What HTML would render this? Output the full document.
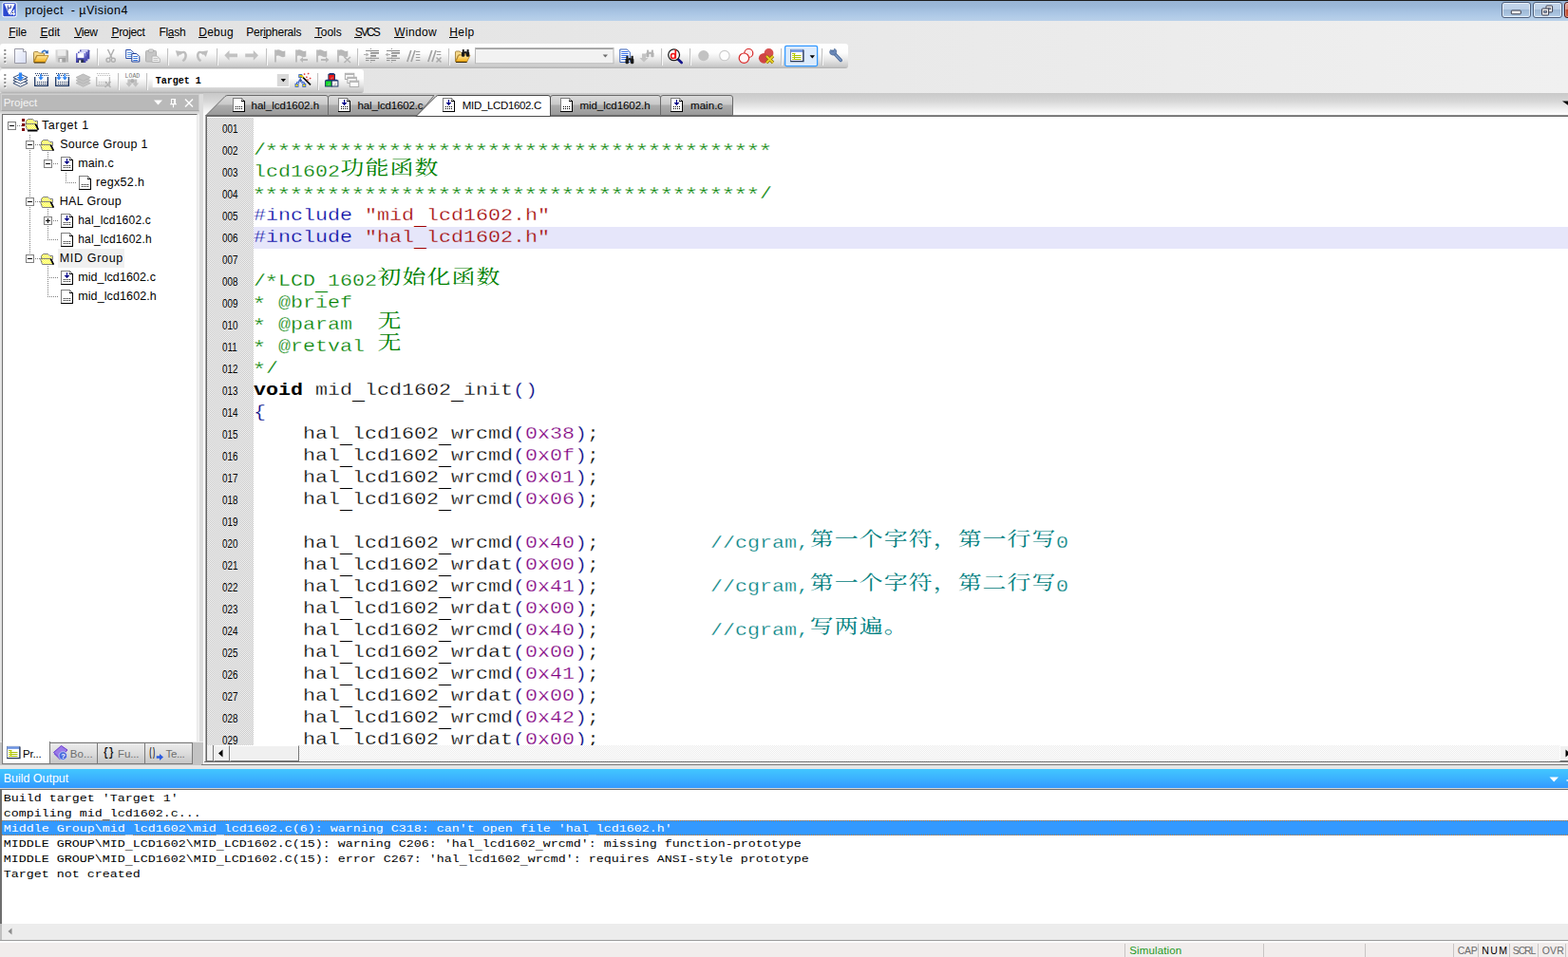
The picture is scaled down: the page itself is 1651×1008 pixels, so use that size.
<!DOCTYPE html>
<html><head><meta charset="utf-8"><title>project - uVision4</title>
<style>

html,body{margin:0;padding:0;}
html{overflow:hidden;width:1651px;height:1008px;}
body{width:1651px;height:1008px;overflow:hidden;position:relative;background:#c0c0c0;font-family:"Liberation Sans",sans-serif;}
#app{position:absolute;left:0;top:0;width:1651px;height:1008px;overflow:hidden;contain:strict;}
.b{position:absolute;box-sizing:border-box;}
.t{position:absolute;white-space:pre;font-family:"Liberation Sans",sans-serif;}
svg{position:absolute;overflow:visible;}
svg text{white-space:pre;}
.cl{position:absolute;white-space:pre;font-family:"Liberation Mono",monospace;font-size:20px;line-height:25.5556px;height:25.5556px;color:#000;transform-origin:0 0;transform:scale(1.08316,0.9);-webkit-text-stroke:0.3px #fff;}
.cl.hl{-webkit-text-stroke-color:#e6e6fa;}
.kw{-webkit-text-stroke:0 transparent;}
.cl i{font-style:normal;display:inline-block;width:24.004px;height:25.5556px;vertical-align:top;position:relative;top:-3.3px;font-family:"Liberation Mono","Noto Serif CJK SC",monospace;font-size:23px;line-height:25.5556px;text-align:center;overflow:visible;-webkit-text-stroke:0 transparent;}
.cl u{text-decoration:none;position:relative;top:4.9px;-webkit-text-stroke:0 transparent;}
.cl b{font-weight:normal;font-size:23.33px;letter-spacing:-2px;line-height:1px;position:relative;top:2.9px;left:-1.6px;}
.bo u{text-decoration:none;position:relative;top:3px;}
.cm{color:#008000}.pp{color:#0000a0}.st{color:#a00000}.nu{color:#800080}.pa{color:#000080}.tc{color:#008080}.kw{font-weight:bold}
.ln{position:absolute;font-size:12.6px;line-height:23px;height:23px;color:#000;transform-origin:0 0;transform:scaleX(0.781);}
.bo{position:absolute;left:3.8px;white-space:pre;font-family:"Liberation Mono",monospace;font-size:13.333px;line-height:18.8235px;height:18.8235px;color:#000;transform-origin:0 0;transform:scaleY(0.85);}

</style></head><body>
<div id="app">
<div class="b " style="left:0px;top:0px;width:1651px;height:22px;background:linear-gradient(#98b4d4 0,#9bb8d8 30%,#a9c5e4 60%,#b9d1ea 100%);"></div>
<div class="b " style="left:0px;top:0px;width:1651px;height:1.2px;background:#1c1c1c;"></div>
<div class="b " style="left:0px;top:22px;width:1651px;height:24px;background:linear-gradient(90deg,#e1e1e1 0,#e8e8e8 50%,#f0f0f0 100%);"></div>
<div class="b " style="left:9.01562px;top:39.3px;width:7.33008px;height:1px;background:#000;"></div>
<div class="b " style="left:42.3156px;top:39.3px;width:8.00391px;height:1px;background:#000;"></div>
<div class="b " style="left:78.1473px;top:39.3px;width:8.00391px;height:1px;background:#000;"></div>
<div class="b " style="left:117.216px;top:39.3px;width:8.00391px;height:1px;background:#000;"></div>
<div class="b " style="left:176.7px;top:39.3px;width:6.67383px;height:1px;background:#000;"></div>
<div class="b " style="left:209.016px;top:39.3px;width:8.66602px;height:1px;background:#000;"></div>
<div class="b " style="left:276.986px;top:39.3px;width:2.66602px;height:1px;background:#000;"></div>
<div class="b " style="left:331.43px;top:39.3px;width:7.33008px;height:1px;background:#000;"></div>
<div class="b " style="left:373.455px;top:39.3px;width:8.00391px;height:1px;background:#000;"></div>
<div class="b " style="left:414.947px;top:39.3px;width:11.3262px;height:1px;background:#000;"></div>
<div class="b " style="left:473.016px;top:39.3px;width:8.66602px;height:1px;background:#000;"></div>
<div class="b " style="left:0px;top:46px;width:1651px;height:52px;background:linear-gradient(90deg,#e1e1e1 0,#e8e8e8 50%,#f0f0f0 100%);"></div>
<div class="b " style="left:0px;top:46px;width:892.7px;height:25.7px;background:linear-gradient(#ffffff 0,#fdfdfd 38%,#e6e6e6 66%,#c8c8c8 93%,#adadad 100%);border-radius:3px;"></div>
<div class="b " style="left:0px;top:72.7px;width:383.3px;height:25.3px;background:linear-gradient(#ffffff 0,#fdfdfd 38%,#e6e6e6 66%,#c8c8c8 93%,#adadad 100%);border-radius:3px;"></div>
<div class="b " style="left:0px;top:98px;width:1651px;height:712px;background:#c3c3c3;"></div>
<div class="b " style="left:1px;top:99px;width:209px;height:17.5px;background:#b9b9b9;border:1px solid #cfcfcf;border-bottom-color:#a8a8a8;"></div>
<svg style="left:162px;top:104px" width="42" height="10" viewBox="0 0 42 10"><path d="M0 1.5h9l-4.5 5z" fill="#fff"/><path d="M18.5 0.5h4v5h-4zM17 5.7h7M20.5 5.7v3.5M21.5 0.5v5" stroke="#fff" stroke-width="1.1" fill="none"/><path d="M33 0.5l8 8M41 0.5l-8 8" stroke="#fff" stroke-width="1.5" fill="none"/></svg>
<div class="b " style="left:207px;top:120px;width:3px;height:662px;background:linear-gradient(90deg,#ffffff 0,#ffffff 33%,#f0f0f0 34%);"></div>
<div class="b " style="left:210px;top:99px;width:4px;height:706px;background:#dcdcdc;"></div>
<div class="b " style="left:214px;top:99px;width:2px;height:706px;background:#fff;"></div>
<div class="b " style="left:0px;top:116.5px;width:210px;height:4.5px;background:linear-gradient(#cacaca,#ececec);"></div>
<div class="b " style="left:0px;top:120px;width:2px;height:662px;background:#e4e4e4;"></div>
<div class="b " style="left:1.5px;top:120px;width:206px;height:661.5px;background:#fff;border:1.5px solid #6e6e6e;border-right-color:#e8e8e8;border-bottom-color:#e8e8e8;"></div>
<div class="b " style="left:0px;top:781px;width:214px;height:1px;background:#ececec;"></div>
<div class="b " style="left:61px;top:262px;width:70px;height:19.7px;background:#f0f0f0;"></div>
<svg style="left:0;top:0" width="214" height="330" viewBox="0 0 214 330"><defs><pattern id="ck" width="2" height="2" patternUnits="userSpaceOnUse"><rect width="2" height="2" fill="#fff"/><rect width="1" height="1" fill="#ffff00"/><rect x="1" y="1" width="1" height="1" fill="#ffff00"/></pattern></defs><path d="M31.5 142 V272" stroke="#808080" stroke-width="1" stroke-dasharray="1 1" fill="none" shape-rendering="crispEdges"/><path d="M18 132.5 H23" stroke="#808080" stroke-width="1" stroke-dasharray="1 1" fill="none" shape-rendering="crispEdges"/><path d="M37 152.5 H42" stroke="#808080" stroke-width="1" stroke-dasharray="1 1" fill="none" shape-rendering="crispEdges"/><path d="M37 212.5 H42" stroke="#808080" stroke-width="1" stroke-dasharray="1 1" fill="none" shape-rendering="crispEdges"/><path d="M37 272.5 H42" stroke="#808080" stroke-width="1" stroke-dasharray="1 1" fill="none" shape-rendering="crispEdges"/><path d="M50.5 160 V168" stroke="#808080" stroke-width="1" stroke-dasharray="1 1" fill="none" shape-rendering="crispEdges"/><path d="M56 172.5 H62" stroke="#808080" stroke-width="1" stroke-dasharray="1 1" fill="none" shape-rendering="crispEdges"/><path d="M69.5 182 V192" stroke="#808080" stroke-width="1" stroke-dasharray="1 1" fill="none" shape-rendering="crispEdges"/><path d="M69 192.5 H81" stroke="#808080" stroke-width="1" stroke-dasharray="1 1" fill="none" shape-rendering="crispEdges"/><path d="M50.5 220 V252" stroke="#808080" stroke-width="1" stroke-dasharray="1 1" fill="none" shape-rendering="crispEdges"/><path d="M50 252.5 H62" stroke="#808080" stroke-width="1" stroke-dasharray="1 1" fill="none" shape-rendering="crispEdges"/><path d="M56 232.5 H62" stroke="#808080" stroke-width="1" stroke-dasharray="1 1" fill="none" shape-rendering="crispEdges"/><path d="M50.5 280 V312" stroke="#808080" stroke-width="1" stroke-dasharray="1 1" fill="none" shape-rendering="crispEdges"/><path d="M50 312.5 H62" stroke="#808080" stroke-width="1" stroke-dasharray="1 1" fill="none" shape-rendering="crispEdges"/><path d="M52 292.5 H62" stroke="#808080" stroke-width="1" stroke-dasharray="1 1" fill="none" shape-rendering="crispEdges"/><g shape-rendering="crispEdges"><rect x="8.5" y="128.5" width="8" height="8" fill="#fff" stroke="#808080" stroke-width="1"/><rect x="10" y="132" width="5" height="1" fill="#000"/></g><g shape-rendering="crispEdges"><rect x="23" y="125" width="3" height="3" fill="#800000"/><rect x="23" y="130" width="3" height="3" fill="#800000"/><rect x="23" y="135" width="3" height="3" fill="#800000"/></g><g transform="translate(26,125)"><path d="M3 12.5 H12.5 V2.5" fill="none" stroke="#000" stroke-width="2"/><path d="M1.5 6 V2.5 L3.5 0.5 H8.5 L10.5 2.5 H13.5 V6.5 H1.5Z" fill="url(#ck)" stroke="#808080" stroke-width="1"/><path d="M0.5 5.5 H11.5 L14.3 11.5 H2.5 Z" fill="url(#ck)" stroke="#808080" stroke-width="1"/><path d="M11.3 5.6 L14.4 11.6" fill="none" stroke="#000" stroke-width="1.7"/></g><g shape-rendering="crispEdges"><rect x="27.5" y="148.5" width="8" height="8" fill="#fff" stroke="#808080" stroke-width="1"/><rect x="29" y="152" width="5" height="1" fill="#000"/></g><g transform="translate(42,147)"><path d="M1.5 6 V2.5 L3.5 0.5 H8.5 L10.5 2.5 H13.5 V6.5 H1.5Z" fill="url(#ck)" stroke="#808080" stroke-width="1"/><path d="M0.5 5.5 H11.5 L14.3 11.5 H2.5 Z" fill="url(#ck)" stroke="#808080" stroke-width="1"/><path d="M11.3 5.6 L14.4 11.6" fill="none" stroke="#000" stroke-width="1.7"/></g><g shape-rendering="crispEdges"><rect x="46.5" y="168.5" width="8" height="8" fill="#fff" stroke="#808080" stroke-width="1"/><rect x="48" y="172" width="5" height="1" fill="#000"/></g><g transform="translate(64,165)" shape-rendering="crispEdges"><path d="M0 0 H9.5 L13 3.5 V15 H0 Z" fill="#fff"/><rect x="0" y="0" width="1" height="15" fill="#808080"/><rect x="0" y="0" width="10" height="1" fill="#808080"/><rect x="12" y="3" width="1" height="12" fill="#000"/><rect x="0" y="14" width="13" height="1" fill="#000"/><rect x="9" y="3" width="4" height="1" fill="#000"/><rect x="9" y="1" width="1" height="2" fill="#909090"/><rect x="10" y="1" width="1" height="1" fill="#606060"/><rect x="11" y="2" width="1" height="1" fill="#606060"/><rect x="6" y="2" width="1" height="3" fill="#00008b"/><rect x="4" y="5" width="5" height="1" fill="#00008b"/><rect x="5" y="6" width="3" height="1" fill="#00008b"/><rect x="6" y="7" width="1" height="1" fill="#00008b"/><rect x="3" y="9" width="1" height="1" fill="#000"/><rect x="5" y="9" width="1" height="1" fill="#000"/><rect x="7" y="9" width="1" height="1" fill="#000"/><rect x="9" y="9" width="1" height="1" fill="#000"/><rect x="3" y="11" width="1" height="1" fill="#000"/><rect x="5" y="11" width="1" height="1" fill="#000"/><rect x="7" y="11" width="1" height="1" fill="#000"/><rect x="9" y="11" width="1" height="1" fill="#000"/></g><g transform="translate(83,185)" shape-rendering="crispEdges"><path d="M0 0 H9.5 L13 3.5 V15 H0 Z" fill="#fff"/><rect x="0" y="0" width="1" height="15" fill="#808080"/><rect x="0" y="0" width="10" height="1" fill="#808080"/><rect x="12" y="3" width="1" height="12" fill="#000"/><rect x="0" y="14" width="13" height="1" fill="#000"/><rect x="9" y="3" width="4" height="1" fill="#000"/><rect x="9" y="1" width="1" height="2" fill="#909090"/><rect x="10" y="1" width="1" height="1" fill="#606060"/><rect x="11" y="2" width="1" height="1" fill="#606060"/><rect x="3" y="9" width="1" height="1" fill="#000"/><rect x="5" y="9" width="1" height="1" fill="#000"/><rect x="7" y="9" width="1" height="1" fill="#000"/><rect x="9" y="9" width="1" height="1" fill="#000"/><rect x="3" y="11" width="1" height="1" fill="#000"/><rect x="5" y="11" width="1" height="1" fill="#000"/><rect x="7" y="11" width="1" height="1" fill="#000"/><rect x="9" y="11" width="1" height="1" fill="#000"/></g><g shape-rendering="crispEdges"><rect x="27.5" y="208.5" width="8" height="8" fill="#fff" stroke="#808080" stroke-width="1"/><rect x="29" y="212" width="5" height="1" fill="#000"/></g><g transform="translate(42,207)"><path d="M1.5 6 V2.5 L3.5 0.5 H8.5 L10.5 2.5 H13.5 V6.5 H1.5Z" fill="url(#ck)" stroke="#808080" stroke-width="1"/><path d="M0.5 5.5 H11.5 L14.3 11.5 H2.5 Z" fill="url(#ck)" stroke="#808080" stroke-width="1"/><path d="M11.3 5.6 L14.4 11.6" fill="none" stroke="#000" stroke-width="1.7"/></g><g shape-rendering="crispEdges"><rect x="46.5" y="228.5" width="8" height="8" fill="#fff" stroke="#808080" stroke-width="1"/><rect x="48" y="232" width="5" height="1" fill="#000"/><rect x="50" y="230" width="1" height="5" fill="#000"/></g><g transform="translate(64,225)" shape-rendering="crispEdges"><path d="M0 0 H9.5 L13 3.5 V15 H0 Z" fill="#fff"/><rect x="0" y="0" width="1" height="15" fill="#808080"/><rect x="0" y="0" width="10" height="1" fill="#808080"/><rect x="12" y="3" width="1" height="12" fill="#000"/><rect x="0" y="14" width="13" height="1" fill="#000"/><rect x="9" y="3" width="4" height="1" fill="#000"/><rect x="9" y="1" width="1" height="2" fill="#909090"/><rect x="10" y="1" width="1" height="1" fill="#606060"/><rect x="11" y="2" width="1" height="1" fill="#606060"/><rect x="6" y="2" width="1" height="3" fill="#00008b"/><rect x="4" y="5" width="5" height="1" fill="#00008b"/><rect x="5" y="6" width="3" height="1" fill="#00008b"/><rect x="6" y="7" width="1" height="1" fill="#00008b"/><rect x="3" y="9" width="1" height="1" fill="#000"/><rect x="5" y="9" width="1" height="1" fill="#000"/><rect x="7" y="9" width="1" height="1" fill="#000"/><rect x="9" y="9" width="1" height="1" fill="#000"/><rect x="3" y="11" width="1" height="1" fill="#000"/><rect x="5" y="11" width="1" height="1" fill="#000"/><rect x="7" y="11" width="1" height="1" fill="#000"/><rect x="9" y="11" width="1" height="1" fill="#000"/></g><g transform="translate(64,245)" shape-rendering="crispEdges"><path d="M0 0 H9.5 L13 3.5 V15 H0 Z" fill="#fff"/><rect x="0" y="0" width="1" height="15" fill="#808080"/><rect x="0" y="0" width="10" height="1" fill="#808080"/><rect x="12" y="3" width="1" height="12" fill="#000"/><rect x="0" y="14" width="13" height="1" fill="#000"/><rect x="9" y="3" width="4" height="1" fill="#000"/><rect x="9" y="1" width="1" height="2" fill="#909090"/><rect x="10" y="1" width="1" height="1" fill="#606060"/><rect x="11" y="2" width="1" height="1" fill="#606060"/><rect x="3" y="9" width="1" height="1" fill="#000"/><rect x="5" y="9" width="1" height="1" fill="#000"/><rect x="7" y="9" width="1" height="1" fill="#000"/><rect x="9" y="9" width="1" height="1" fill="#000"/><rect x="3" y="11" width="1" height="1" fill="#000"/><rect x="5" y="11" width="1" height="1" fill="#000"/><rect x="7" y="11" width="1" height="1" fill="#000"/><rect x="9" y="11" width="1" height="1" fill="#000"/></g><g shape-rendering="crispEdges"><rect x="27.5" y="268.5" width="8" height="8" fill="#fff" stroke="#808080" stroke-width="1"/><rect x="29" y="272" width="5" height="1" fill="#000"/></g><g transform="translate(42,267)"><path d="M1.5 6 V2.5 L3.5 0.5 H8.5 L10.5 2.5 H13.5 V6.5 H1.5Z" fill="url(#ck)" stroke="#808080" stroke-width="1"/><path d="M0.5 5.5 H11.5 L14.3 11.5 H2.5 Z" fill="url(#ck)" stroke="#808080" stroke-width="1"/><path d="M11.3 5.6 L14.4 11.6" fill="none" stroke="#000" stroke-width="1.7"/></g><g transform="translate(64,285)" shape-rendering="crispEdges"><path d="M0 0 H9.5 L13 3.5 V15 H0 Z" fill="#fff"/><rect x="0" y="0" width="1" height="15" fill="#808080"/><rect x="0" y="0" width="10" height="1" fill="#808080"/><rect x="12" y="3" width="1" height="12" fill="#000"/><rect x="0" y="14" width="13" height="1" fill="#000"/><rect x="9" y="3" width="4" height="1" fill="#000"/><rect x="9" y="1" width="1" height="2" fill="#909090"/><rect x="10" y="1" width="1" height="1" fill="#606060"/><rect x="11" y="2" width="1" height="1" fill="#606060"/><rect x="6" y="2" width="1" height="3" fill="#00008b"/><rect x="4" y="5" width="5" height="1" fill="#00008b"/><rect x="5" y="6" width="3" height="1" fill="#00008b"/><rect x="6" y="7" width="1" height="1" fill="#00008b"/><rect x="3" y="9" width="1" height="1" fill="#000"/><rect x="5" y="9" width="1" height="1" fill="#000"/><rect x="7" y="9" width="1" height="1" fill="#000"/><rect x="9" y="9" width="1" height="1" fill="#000"/><rect x="3" y="11" width="1" height="1" fill="#000"/><rect x="5" y="11" width="1" height="1" fill="#000"/><rect x="7" y="11" width="1" height="1" fill="#000"/><rect x="9" y="11" width="1" height="1" fill="#000"/></g><g transform="translate(64,305)" shape-rendering="crispEdges"><path d="M0 0 H9.5 L13 3.5 V15 H0 Z" fill="#fff"/><rect x="0" y="0" width="1" height="15" fill="#808080"/><rect x="0" y="0" width="10" height="1" fill="#808080"/><rect x="12" y="3" width="1" height="12" fill="#000"/><rect x="0" y="14" width="13" height="1" fill="#000"/><rect x="9" y="3" width="4" height="1" fill="#000"/><rect x="9" y="1" width="1" height="2" fill="#909090"/><rect x="10" y="1" width="1" height="1" fill="#606060"/><rect x="11" y="2" width="1" height="1" fill="#606060"/><rect x="3" y="9" width="1" height="1" fill="#000"/><rect x="5" y="9" width="1" height="1" fill="#000"/><rect x="7" y="9" width="1" height="1" fill="#000"/><rect x="9" y="9" width="1" height="1" fill="#000"/><rect x="3" y="11" width="1" height="1" fill="#000"/><rect x="5" y="11" width="1" height="1" fill="#000"/><rect x="7" y="11" width="1" height="1" fill="#000"/><rect x="9" y="11" width="1" height="1" fill="#000"/></g></svg>
<div class="b " style="left:0px;top:782px;width:214px;height:28px;background:#c3c3c3;"></div>
<div class="b " style="left:2px;top:781px;width:51px;height:23.5px;background:#fff;border:1px solid #7a7a7a;border-top:none;"></div>
<div class="b " style="left:52px;top:782px;width:51px;height:22.5px;background:linear-gradient(#ececec,#dcdcdc 50%,#c6c6c6);border:1px solid #7a7a7a;"></div>
<div class="b " style="left:102px;top:782px;width:51px;height:22.5px;background:linear-gradient(#ececec,#dcdcdc 50%,#c6c6c6);border:1px solid #7a7a7a;"></div>
<div class="b " style="left:152px;top:782px;width:51px;height:22.5px;background:linear-gradient(#ececec,#dcdcdc 50%,#c6c6c6);border:1px solid #7a7a7a;"></div>
<div class="b " style="left:214px;top:98px;width:1437.5px;height:24px;background:linear-gradient(#c9c9c9 0,#d6d6d6 35%,#f2f2f2 75%,#ffffff 100%);"></div>
<div class="b " style="left:216px;top:121px;width:1435px;height:682px;background:#fff;border-left:1px solid #a6a6a6;border-top:1px solid #8a8a8a;"></div>
<div class="b " style="left:217px;top:122px;width:1434px;height:681px;border-left:1px solid #686868;border-top:1px solid #6a6a6a;border-bottom:1px solid #707070;background:#fff;"></div>
<svg style="left:0;top:0" width="1651" height="125" viewBox="0 0 1651 125"><defs><linearGradient id="tg" x1="0" y1="0" x2="0" y2="1"><stop offset="0" stop-color="#dcdcdc"/><stop offset="0.45" stop-color="#c9c9c9"/><stop offset="0.5" stop-color="#acacac"/><stop offset="1" stop-color="#999999"/></linearGradient></defs><path d="M217 121.5 L237 101.5 Q238 100.5 240 100.5 H343 Q345.5 100.5 345.5 103 V121.5 Z" fill="url(#tg)" stroke="#6a6a6a" stroke-width="1"/><path d="M345.5 121.5 V103 Q345.5 100.5 348 100.5 H457 L440 121.5 Z" fill="url(#tg)" stroke="#6a6a6a" stroke-width="1"/><path d="M579.5 121.5 V103 Q579.5 100.5 582 100.5 H693 Q695.5 100.5 695.5 103 V121.5 Z" fill="url(#tg)" stroke="#6a6a6a" stroke-width="1"/><path d="M695.5 121.5 V103 Q695.5 100.5 698 100.5 H769 Q771.5 100.5 771.5 103 V121.5 Z" fill="url(#tg)" stroke="#6a6a6a" stroke-width="1"/><path d="M438 122.5 L459 101.5 Q460 100.5 462 100.5 H577 Q579.5 100.5 579.5 103 V122.5 Z" fill="#fff" stroke="#4a4a4a" stroke-width="1"/><g transform="translate(245,103)" shape-rendering="crispEdges"><path d="M0 0 H9.5 L13 3.5 V15 H0 Z" fill="#fff"/><rect x="0" y="0" width="1" height="15" fill="#808080"/><rect x="0" y="0" width="10" height="1" fill="#808080"/><rect x="12" y="3" width="1" height="12" fill="#000"/><rect x="0" y="14" width="13" height="1" fill="#000"/><rect x="9" y="3" width="4" height="1" fill="#000"/><rect x="9" y="1" width="1" height="2" fill="#909090"/><rect x="10" y="1" width="1" height="1" fill="#606060"/><rect x="11" y="2" width="1" height="1" fill="#606060"/><rect x="3" y="9" width="1" height="1" fill="#000"/><rect x="5" y="9" width="1" height="1" fill="#000"/><rect x="7" y="9" width="1" height="1" fill="#000"/><rect x="9" y="9" width="1" height="1" fill="#000"/><rect x="3" y="11" width="1" height="1" fill="#000"/><rect x="5" y="11" width="1" height="1" fill="#000"/><rect x="7" y="11" width="1" height="1" fill="#000"/><rect x="9" y="11" width="1" height="1" fill="#000"/></g><g transform="translate(356,103)" shape-rendering="crispEdges"><path d="M0 0 H9.5 L13 3.5 V15 H0 Z" fill="#fff"/><rect x="0" y="0" width="1" height="15" fill="#808080"/><rect x="0" y="0" width="10" height="1" fill="#808080"/><rect x="12" y="3" width="1" height="12" fill="#000"/><rect x="0" y="14" width="13" height="1" fill="#000"/><rect x="9" y="3" width="4" height="1" fill="#000"/><rect x="9" y="1" width="1" height="2" fill="#909090"/><rect x="10" y="1" width="1" height="1" fill="#606060"/><rect x="11" y="2" width="1" height="1" fill="#606060"/><rect x="6" y="2" width="1" height="3" fill="#00008b"/><rect x="4" y="5" width="5" height="1" fill="#00008b"/><rect x="5" y="6" width="3" height="1" fill="#00008b"/><rect x="6" y="7" width="1" height="1" fill="#00008b"/><rect x="3" y="9" width="1" height="1" fill="#000"/><rect x="5" y="9" width="1" height="1" fill="#000"/><rect x="7" y="9" width="1" height="1" fill="#000"/><rect x="9" y="9" width="1" height="1" fill="#000"/><rect x="3" y="11" width="1" height="1" fill="#000"/><rect x="5" y="11" width="1" height="1" fill="#000"/><rect x="7" y="11" width="1" height="1" fill="#000"/><rect x="9" y="11" width="1" height="1" fill="#000"/></g><g transform="translate(466,103)" shape-rendering="crispEdges"><path d="M0 0 H9.5 L13 3.5 V15 H0 Z" fill="#fff"/><rect x="0" y="0" width="1" height="15" fill="#808080"/><rect x="0" y="0" width="10" height="1" fill="#808080"/><rect x="12" y="3" width="1" height="12" fill="#000"/><rect x="0" y="14" width="13" height="1" fill="#000"/><rect x="9" y="3" width="4" height="1" fill="#000"/><rect x="9" y="1" width="1" height="2" fill="#909090"/><rect x="10" y="1" width="1" height="1" fill="#606060"/><rect x="11" y="2" width="1" height="1" fill="#606060"/><rect x="6" y="2" width="1" height="3" fill="#00008b"/><rect x="4" y="5" width="5" height="1" fill="#00008b"/><rect x="5" y="6" width="3" height="1" fill="#00008b"/><rect x="6" y="7" width="1" height="1" fill="#00008b"/><rect x="3" y="9" width="1" height="1" fill="#000"/><rect x="5" y="9" width="1" height="1" fill="#000"/><rect x="7" y="9" width="1" height="1" fill="#000"/><rect x="9" y="9" width="1" height="1" fill="#000"/><rect x="3" y="11" width="1" height="1" fill="#000"/><rect x="5" y="11" width="1" height="1" fill="#000"/><rect x="7" y="11" width="1" height="1" fill="#000"/><rect x="9" y="11" width="1" height="1" fill="#000"/></g><g transform="translate(590,103)" shape-rendering="crispEdges"><path d="M0 0 H9.5 L13 3.5 V15 H0 Z" fill="#fff"/><rect x="0" y="0" width="1" height="15" fill="#808080"/><rect x="0" y="0" width="10" height="1" fill="#808080"/><rect x="12" y="3" width="1" height="12" fill="#000"/><rect x="0" y="14" width="13" height="1" fill="#000"/><rect x="9" y="3" width="4" height="1" fill="#000"/><rect x="9" y="1" width="1" height="2" fill="#909090"/><rect x="10" y="1" width="1" height="1" fill="#606060"/><rect x="11" y="2" width="1" height="1" fill="#606060"/><rect x="3" y="9" width="1" height="1" fill="#000"/><rect x="5" y="9" width="1" height="1" fill="#000"/><rect x="7" y="9" width="1" height="1" fill="#000"/><rect x="9" y="9" width="1" height="1" fill="#000"/><rect x="3" y="11" width="1" height="1" fill="#000"/><rect x="5" y="11" width="1" height="1" fill="#000"/><rect x="7" y="11" width="1" height="1" fill="#000"/><rect x="9" y="11" width="1" height="1" fill="#000"/></g><g transform="translate(706,103)" shape-rendering="crispEdges"><path d="M0 0 H9.5 L13 3.5 V15 H0 Z" fill="#fff"/><rect x="0" y="0" width="1" height="15" fill="#808080"/><rect x="0" y="0" width="10" height="1" fill="#808080"/><rect x="12" y="3" width="1" height="12" fill="#000"/><rect x="0" y="14" width="13" height="1" fill="#000"/><rect x="9" y="3" width="4" height="1" fill="#000"/><rect x="9" y="1" width="1" height="2" fill="#909090"/><rect x="10" y="1" width="1" height="1" fill="#606060"/><rect x="11" y="2" width="1" height="1" fill="#606060"/><rect x="6" y="2" width="1" height="3" fill="#00008b"/><rect x="4" y="5" width="5" height="1" fill="#00008b"/><rect x="5" y="6" width="3" height="1" fill="#00008b"/><rect x="6" y="7" width="1" height="1" fill="#00008b"/><rect x="3" y="9" width="1" height="1" fill="#000"/><rect x="5" y="9" width="1" height="1" fill="#000"/><rect x="7" y="9" width="1" height="1" fill="#000"/><rect x="9" y="9" width="1" height="1" fill="#000"/><rect x="3" y="11" width="1" height="1" fill="#000"/><rect x="5" y="11" width="1" height="1" fill="#000"/><rect x="7" y="11" width="1" height="1" fill="#000"/><rect x="9" y="11" width="1" height="1" fill="#000"/></g><path d="M1645 106.5 h7 v5 z" fill="#000"/></svg>
<div class="b " style="left:218px;top:124px;width:48.5px;height:661px;background:#dedede;background-image:linear-gradient(45deg,#c8c8c8 25%,transparent 25%,transparent 75%,#c8c8c8 75%),linear-gradient(45deg,#c8c8c8 25%,transparent 25%,transparent 75%,#c8c8c8 75%);background-size:2px 2px;background-position:0 0,1px 1px;background-color:#f4f4f4;"></div>
<div class="b " style="left:266.5px;top:239px;width:1385px;height:23px;background:#e6e6fa;"></div>
<div class="b" style="left:216px;top:124px;width:1435px;height:661px;overflow:hidden;">
<div class="ln" style="left:17.6px;top:1px">001</div>
<div class="ln" style="left:17.6px;top:24px">002</div>
<div class="cl" style="left:50.5px;top:23px"><span class="cm">/<b>*****************************************</b></span></div>
<div class="ln" style="left:17.6px;top:47px">003</div>
<div class="cl" style="left:50.5px;top:46px"><span class="cm">lcd1602<i>功</i><i>能</i><i>函</i><i>数</i></span></div>
<div class="ln" style="left:17.6px;top:70px">004</div>
<div class="cl" style="left:50.5px;top:69px"><span class="cm"><b>*****************************************</b>/</span></div>
<div class="ln" style="left:17.6px;top:93px">005</div>
<div class="cl" style="left:50.5px;top:92px"><span class="pp">#include </span><span class="st">&quot;mid<u>_</u>lcd1602.h&quot;</span></div>
<div class="ln" style="left:17.6px;top:116px">006</div>
<div class="cl hl" style="left:50.5px;top:115px"><span class="pp">#include </span><span class="st">&quot;hal<u>_</u>lcd1602.h&quot;</span></div>
<div class="ln" style="left:17.6px;top:139px">007</div>
<div class="ln" style="left:17.6px;top:162px">008</div>
<div class="cl" style="left:50.5px;top:161px"><span class="cm">/<b>*</b>LCD<u>_</u>1602<i>初</i><i>始</i><i>化</i><i>函</i><i>数</i></span></div>
<div class="ln" style="left:17.6px;top:185px">009</div>
<div class="cl" style="left:50.5px;top:184px"><span class="cm"><b>*</b> @brief</span></div>
<div class="ln" style="left:17.6px;top:208px">010</div>
<div class="cl" style="left:50.5px;top:207px"><span class="cm"><b>*</b> @param  <i>无</i></span></div>
<div class="ln" style="left:17.6px;top:231px">011</div>
<div class="cl" style="left:50.5px;top:230px"><span class="cm"><b>*</b> @retval <i>无</i></span></div>
<div class="ln" style="left:17.6px;top:254px">012</div>
<div class="cl" style="left:50.5px;top:253px"><span class="cm"><b>*</b>/</span></div>
<div class="ln" style="left:17.6px;top:277px">013</div>
<div class="cl" style="left:50.5px;top:276px"><span class="kw">void</span> mid<u>_</u>lcd1602<u>_</u>init<span class="pa">()</span></div>
<div class="ln" style="left:17.6px;top:300px">014</div>
<div class="cl" style="left:50.5px;top:299px"><span class="pa">{</span></div>
<div class="ln" style="left:17.6px;top:323px">015</div>
<div class="cl" style="left:50.5px;top:322px">    hal<u>_</u>lcd1602<u>_</u>wrcmd<span class="pa">(</span><span class="nu">0x38</span><span class="pa">)</span>;</div>
<div class="ln" style="left:17.6px;top:346px">016</div>
<div class="cl" style="left:50.5px;top:345px">    hal<u>_</u>lcd1602<u>_</u>wrcmd<span class="pa">(</span><span class="nu">0x0f</span><span class="pa">)</span>;</div>
<div class="ln" style="left:17.6px;top:369px">017</div>
<div class="cl" style="left:50.5px;top:368px">    hal<u>_</u>lcd1602<u>_</u>wrcmd<span class="pa">(</span><span class="nu">0x01</span><span class="pa">)</span>;</div>
<div class="ln" style="left:17.6px;top:392px">018</div>
<div class="cl" style="left:50.5px;top:391px">    hal<u>_</u>lcd1602<u>_</u>wrcmd<span class="pa">(</span><span class="nu">0x06</span><span class="pa">)</span>;</div>
<div class="ln" style="left:17.6px;top:415px">019</div>
<div class="ln" style="left:17.6px;top:438px">020</div>
<div class="cl" style="left:50.5px;top:437px">    hal<u>_</u>lcd1602<u>_</u>wrcmd<span class="pa">(</span><span class="nu">0x40</span><span class="pa">)</span>;<span class="tc">         //cgram,<i>第</i><i>一</i><i>个</i><i>字</i><i>符</i><i>，</i><i>第</i><i>一</i><i>行</i><i>写</i>0</span></div>
<div class="ln" style="left:17.6px;top:461px">021</div>
<div class="cl" style="left:50.5px;top:460px">    hal<u>_</u>lcd1602<u>_</u>wrdat<span class="pa">(</span><span class="nu">0x00</span><span class="pa">)</span>;</div>
<div class="ln" style="left:17.6px;top:484px">022</div>
<div class="cl" style="left:50.5px;top:483px">    hal<u>_</u>lcd1602<u>_</u>wrcmd<span class="pa">(</span><span class="nu">0x41</span><span class="pa">)</span>;<span class="tc">         //cgram,<i>第</i><i>一</i><i>个</i><i>字</i><i>符</i><i>，</i><i>第</i><i>二</i><i>行</i><i>写</i>0</span></div>
<div class="ln" style="left:17.6px;top:507px">023</div>
<div class="cl" style="left:50.5px;top:506px">    hal<u>_</u>lcd1602<u>_</u>wrdat<span class="pa">(</span><span class="nu">0x00</span><span class="pa">)</span>;</div>
<div class="ln" style="left:17.6px;top:530px">024</div>
<div class="cl" style="left:50.5px;top:529px">    hal<u>_</u>lcd1602<u>_</u>wrcmd<span class="pa">(</span><span class="nu">0x40</span><span class="pa">)</span>;<span class="tc">         //cgram,<i>写</i><i>两</i><i>遍</i><i>。</i></span></div>
<div class="ln" style="left:17.6px;top:553px">025</div>
<div class="cl" style="left:50.5px;top:552px">    hal<u>_</u>lcd1602<u>_</u>wrdat<span class="pa">(</span><span class="nu">0x00</span><span class="pa">)</span>;</div>
<div class="ln" style="left:17.6px;top:576px">026</div>
<div class="cl" style="left:50.5px;top:575px">    hal<u>_</u>lcd1602<u>_</u>wrcmd<span class="pa">(</span><span class="nu">0x41</span><span class="pa">)</span>;</div>
<div class="ln" style="left:17.6px;top:599px">027</div>
<div class="cl" style="left:50.5px;top:598px">    hal<u>_</u>lcd1602<u>_</u>wrdat<span class="pa">(</span><span class="nu">0x00</span><span class="pa">)</span>;</div>
<div class="ln" style="left:17.6px;top:622px">028</div>
<div class="cl" style="left:50.5px;top:621px">    hal<u>_</u>lcd1602<u>_</u>wrcmd<span class="pa">(</span><span class="nu">0x42</span><span class="pa">)</span>;</div>
<div class="ln" style="left:17.6px;top:645px">029</div>
<div class="cl" style="left:50.5px;top:644px">    hal<u>_</u>lcd1602<u>_</u>wrdat<span class="pa">(</span><span class="nu">0x00</span><span class="pa">)</span>;</div>
</div>
<div class="b " style="left:218px;top:785px;width:1433px;height:17px;background-color:#fff;background-image:linear-gradient(45deg,#ececec 25%,transparent 25%,transparent 75%,#ececec 75%),linear-gradient(45deg,#ececec 25%,transparent 25%,transparent 75%,#ececec 75%);background-size:2px 2px;background-position:0 0,1px 1px;"></div>
<div class="b " style="left:218px;top:785px;width:6.5px;height:17px;background:#f0f0f0;border-right:1px solid #777;border-bottom:1px solid #777;"></div>
<div class="b " style="left:224.5px;top:785px;width:17px;height:17px;background:#f0f0f0;border:1px solid #fff;border-right-color:#777;border-bottom-color:#777;"></div>
<div class="b " style="left:241.5px;top:785px;width:73px;height:17px;background:#f0f0f0;border:1px solid #fff;border-right-color:#777;border-bottom-color:#777;"></div>
<div class="b " style="left:1642px;top:785px;width:17px;height:17px;background:#f0f0f0;border:1px solid #fff;border-right-color:#777;border-bottom-color:#777;"></div>
<svg style="left:0;top:785px" width="1651" height="17" viewBox="0 0 1651 17"><path d="M234.5 4.5v8l-4.5-4z" fill="#000"/><path d="M1648.5 4.5v8l4.5-4z" fill="#000"/></svg>
<div class="b " style="left:214.5px;top:802px;width:1437px;height:1px;background:#6e6e6e;"></div>
<div class="b " style="left:214.5px;top:803px;width:1437px;height:1.5px;background:#fff;"></div>
<div class="b " style="left:212px;top:804.5px;width:1440px;height:1.5px;background:#777;"></div>
<div class="b " style="left:0px;top:806px;width:1651px;height:4px;background:#e6e6e6;"></div>
<div class="b " style="left:0px;top:810px;width:1651px;height:19.5px;background:linear-gradient(#42c6ff 0,#3cb4ff 45%,#3399ff 100%);"></div>
<svg style="left:1631px;top:817.5px" width="20" height="8" viewBox="0 0 20 8"><path d="M0.5 0.5h9.5l-4.75 5z" fill="#fff"/><path d="M18.5 4h3" stroke="#fff" stroke-width="1.5"/></svg>
<div class="b " style="left:0px;top:829.5px;width:1651px;height:1px;background:#d8d8d8;"></div>
<div class="b " style="left:0px;top:830.5px;width:1651px;height:1.5px;background:#6e6e6e;"></div>
<div class="b " style="left:0px;top:832px;width:1651px;height:141px;background:#fff;border-left:2px solid #6e6e6e;"></div>
<div class="b " style="left:2px;top:864px;width:1649px;height:16px;background:#3399ff;border-top:1px dotted #c87a30;border-bottom:1px dotted #c87a30;"></div>
<div class="bo" style="top:834px;">Build target &#x27;Target 1&#x27;</div>
<div class="bo" style="top:850px;">compiling mid<u>_</u>lcd1602.c...</div>
<div class="bo" style="top:866px;color:#fff;">Middle Group\mid<u>_</u>lcd1602\mid<u>_</u>lcd1602.c(6): warning C318: can&#x27;t open file &#x27;hal<u>_</u>lcd1602.h&#x27;</div>
<div class="bo" style="top:882px;">MIDDLE GROUP\MID<u>_</u>LCD1602\MID<u>_</u>LCD1602.C(15): warning C206: &#x27;hal<u>_</u>lcd1602<u>_</u>wrcmd&#x27;: missing function-prototype</div>
<div class="bo" style="top:898px;">MIDDLE GROUP\MID<u>_</u>LCD1602\MID<u>_</u>LCD1602.C(15): error C267: &#x27;hal<u>_</u>lcd1602<u>_</u>wrcmd&#x27;: requires ANSI-style prototype</div>
<div class="bo" style="top:914px;">Target not created</div>
<div class="b " style="left:2px;top:973px;width:1649px;height:16.5px;background:#ececec;"></div>
<svg style="left:7.5px;top:976.5px" width="6" height="8" viewBox="0 0 6 8"><path d="M4.5 0.5v7l-4-3.5z" fill="#8c8c8c"/></svg>
<div class="b " style="left:0px;top:989.5px;width:1651px;height:1.5px;background:#9a9a9a;"></div>
<div class="b " style="left:0px;top:991px;width:1651px;height:1.5px;background:#fff;"></div>
<div class="b " style="left:0px;top:992.5px;width:1651px;height:15.5px;background:#f1edec;"></div>
<div class="b " style="left:1184px;top:993.5px;width:1px;height:14.5px;background:#c8c4c3;"></div>
<div class="b " style="left:1330px;top:993.5px;width:1px;height:14.5px;background:#c8c4c3;"></div>
<div class="b " style="left:1437px;top:993.5px;width:1px;height:14.5px;background:#c8c4c3;"></div>
<div class="b " style="left:1530px;top:993.5px;width:1px;height:14.5px;background:#c8c4c3;"></div>
<div class="b " style="left:1556px;top:993.5px;width:1px;height:14.5px;background:#c8c4c3;"></div>
<div class="b " style="left:1588.5px;top:993.5px;width:1px;height:14.5px;background:#c8c4c3;"></div>
<div class="b " style="left:1619px;top:993.5px;width:1px;height:14.5px;background:#c8c4c3;"></div>
<div class="b " style="left:1648px;top:993.5px;width:1px;height:14.5px;background:#c8c4c3;"></div>
<svg style="left:2px;top:2px" width="16" height="16.5" viewBox="0 0 16 16.5">
<rect x="0.3" y="0.3" width="15.4" height="15.9" rx="2.2" fill="#fff"/>
<rect x="1.3" y="1.3" width="13.4" height="13.9" rx="1.3" fill="#2a48d0"/>
<path d="M2.6 2 H13.6 L8.6 13.2 H7.4 Z" fill="#fff"/>
<path d="M6.3 3.6v5.6M6.3 6.4h2.9M9.3 3.6v3" stroke="#1a2c9a" stroke-width="0.9" fill="none"/>
<path d="M9.3 13.6 L12.6 9.2 V14.2 M10 12.6 H14" stroke="#fff" stroke-width="1.3" fill="none"/>
<circle cx="11.5" cy="11.5" r="0.6" fill="#111"/>
</svg>
<div class="b " style="left:1581px;top:2px;width:30.5px;height:17px;border:1px solid #4e5f7c;border-radius:3px;background:linear-gradient(#c4d6ec 0,#bcd0e8 45%,#9fb9d6 50%,#a9c3df 80%,#bcd4ec 100%);box-shadow:inset 0 0 0 1px rgba(255,255,255,0.65);"></div>
<div class="b " style="left:1614px;top:2px;width:30.5px;height:17px;border:1px solid #4e5f7c;border-radius:3px;background:linear-gradient(#c4d6ec 0,#bcd0e8 45%,#9fb9d6 50%,#a9c3df 80%,#bcd4ec 100%);box-shadow:inset 0 0 0 1px rgba(255,255,255,0.65);"></div>
<div class="b " style="left:1647px;top:2px;width:8px;height:17px;border:1px solid #4a1518;border-radius:3px;background:linear-gradient(#e8a79c 0,#d98a7c 45%,#c2482c 50%,#cc5a3c 100%);box-shadow:inset 0 0 0 1px rgba(255,255,255,0.4);"></div>
<svg style="left:1581px;top:2.5px" width="70" height="17" viewBox="0 0 70 17">
<rect x="10.3" y="8" width="10" height="3.8" rx="0.8" fill="#f2f2f2" stroke="#3c3c4c" stroke-width="1"/>
<rect x="47" y="3" width="6.6" height="6.8" rx="0.8" fill="#f2f2f2" stroke="#3c3c4c" stroke-width="1"/>
<rect x="49" y="5.2" width="2.4" height="1.8" fill="#8aa4c6" stroke="#3c3c4c" stroke-width="0.6"/>
<rect x="42.6" y="6" width="7" height="7" rx="0.8" fill="#f2f2f2" stroke="#3c3c4c" stroke-width="1"/>
<rect x="44.7" y="8.5" width="2.8" height="2" fill="#8aa4c6" stroke="#3c3c4c" stroke-width="0.7"/>
</svg>
<svg style="left:0;top:0" width="900" height="100" viewBox="0 0 900 100"><rect x="5" y="52.7" width="2" height="2" fill="#fff"/><rect x="4.3" y="52" width="2" height="2" fill="#8c8c8c"/><rect x="5" y="56.7" width="2" height="2" fill="#fff"/><rect x="4.3" y="56" width="2" height="2" fill="#8c8c8c"/><rect x="5" y="60.7" width="2" height="2" fill="#fff"/><rect x="4.3" y="60" width="2" height="2" fill="#8c8c8c"/><rect x="5" y="64.7" width="2" height="2" fill="#fff"/><rect x="4.3" y="64" width="2" height="2" fill="#8c8c8c"/><rect x="5" y="78.7" width="2" height="2" fill="#fff"/><rect x="4.3" y="78" width="2" height="2" fill="#8c8c8c"/><rect x="5" y="82.7" width="2" height="2" fill="#fff"/><rect x="4.3" y="82" width="2" height="2" fill="#8c8c8c"/><rect x="5" y="86.7" width="2" height="2" fill="#fff"/><rect x="4.3" y="86" width="2" height="2" fill="#8c8c8c"/><rect x="5" y="90.7" width="2" height="2" fill="#fff"/><rect x="4.3" y="90" width="2" height="2" fill="#8c8c8c"/><path d="M102.5 51v18" stroke="#c2c2c2" stroke-width="1"/><path d="M103.5 51v18" stroke="#f8f8f8" stroke-width="1"/><path d="M176.5 51v18" stroke="#c2c2c2" stroke-width="1"/><path d="M177.5 51v18" stroke="#f8f8f8" stroke-width="1"/><path d="M228.5 51v18" stroke="#c2c2c2" stroke-width="1"/><path d="M229.5 51v18" stroke="#f8f8f8" stroke-width="1"/><path d="M280.5 51v18" stroke="#c2c2c2" stroke-width="1"/><path d="M281.5 51v18" stroke="#f8f8f8" stroke-width="1"/><path d="M376.5 51v18" stroke="#c2c2c2" stroke-width="1"/><path d="M377.5 51v18" stroke="#f8f8f8" stroke-width="1"/><path d="M472.5 51v18" stroke="#c2c2c2" stroke-width="1"/><path d="M473.5 51v18" stroke="#f8f8f8" stroke-width="1"/><path d="M696.5 51v18" stroke="#c2c2c2" stroke-width="1"/><path d="M697.5 51v18" stroke="#f8f8f8" stroke-width="1"/><path d="M726.5 51v18" stroke="#c2c2c2" stroke-width="1"/><path d="M727.5 51v18" stroke="#f8f8f8" stroke-width="1"/><path d="M822.5 51v18" stroke="#c2c2c2" stroke-width="1"/><path d="M823.5 51v18" stroke="#f8f8f8" stroke-width="1"/><path d="M865.5 51v18" stroke="#c2c2c2" stroke-width="1"/><path d="M866.5 51v18" stroke="#f8f8f8" stroke-width="1"/><path d="M124.5 77v18" stroke="#c2c2c2" stroke-width="1"/><path d="M125.5 77v18" stroke="#f8f8f8" stroke-width="1"/><path d="M154.5 77v18" stroke="#c2c2c2" stroke-width="1"/><path d="M155.5 77v18" stroke="#f8f8f8" stroke-width="1"/><path d="M334.5 77v18" stroke="#c2c2c2" stroke-width="1"/><path d="M335.5 77v18" stroke="#f8f8f8" stroke-width="1"/><defs><linearGradient id="pg" x1="0" y1="0" x2="1" y2="1"><stop offset="0" stop-color="#fbfcff"/><stop offset="1" stop-color="#d6dcf2"/></linearGradient><linearGradient id="fo" x1="0" y1="0" x2="0" y2="1"><stop offset="0" stop-color="#ffeaa6"/><stop offset="1" stop-color="#f2a90c"/></linearGradient><linearGradient id="gr" x1="0" y1="0" x2="1" y2="0"><stop offset="0" stop-color="#d6d6d6"/><stop offset="1" stop-color="#b4b4b4"/></linearGradient><linearGradient id="bl" x1="0" y1="0" x2="0" y2="1"><stop offset="0" stop-color="#7a7ad8"/><stop offset="1" stop-color="#3a3aa0"/></linearGradient><linearGradient id="wt" x1="0" y1="0" x2="0" y2="1"><stop offset="0" stop-color="#8fb0f0"/><stop offset="1" stop-color="#4a78d8"/></linearGradient></defs><path d="M15.5 51.5 H24.5 L27.5 54.5 V66.5 H15.5 Z" fill="url(#pg)" stroke="#9a9aa6" stroke-width="1"/><path d="M24.5 51.5 V54.5 H27.5" fill="#fff" stroke="#9a9aa6" stroke-width="1"/><g transform="translate(35,54)"><path d="M0.5 11.5 V1.5 Q0.5 0.5 1.5 0.5 H5 L6.5 2 H11.5 V4.5 H3.5 L0.5 11.5Z" fill="#f6d98a" stroke="#a88a4a" stroke-width="1"/><path d="M0.8 11.6 L4 4.6 H16 L12.6 11.6 Z" fill="url(#fo)" stroke="#b07a10" stroke-width="0.8"/><path d="M1 12 H12.6" stroke="#3a2a08" stroke-width="1"/></g><path d="M44 55.5 Q46.5 51.5 49.5 55" fill="none" stroke="#3a78c8" stroke-width="1.6"/><path d="M47.2 56.3 L51 56.5 L50.6 52.6 Z" fill="#2a60b0"/><g transform="translate(58.5,52) scale(1)"><path d="M0 0.5 H12.5 L13.5 1.5 V13.5 H0 Z" fill="url(#gr)"/><rect x="2" y="0.5" width="9" height="6.3" fill="#ececec"/><rect x="3" y="9" width="7.5" height="4.5" fill="#a2a2a2"/><rect x="4.2" y="10" width="2.6" height="3.5" fill="#ececec"/></g><g transform="translate(84,52) scale(0.762963)"><path d="M0 0.5 H12.5 L13.5 1.5 V13.5 H0 Z" fill="#4646aa"/><rect x="2" y="0.5" width="9" height="6.3" fill="#dcdcf8"/><rect x="3" y="9" width="7.5" height="4.5" fill="#2a2a70"/><rect x="4.2" y="10" width="2.6" height="3.5" fill="#dcdcf8"/></g><g transform="translate(82,54) scale(0.762963)"><path d="M0 0.5 H12.5 L13.5 1.5 V13.5 H0 Z" fill="#5050b6"/><rect x="2" y="0.5" width="9" height="6.3" fill="#e6e6ff"/><rect x="3" y="9" width="7.5" height="4.5" fill="#2a2a70"/><rect x="4.2" y="10" width="2.6" height="3.5" fill="#e6e6ff"/></g><g transform="translate(80,55.7) scale(0.762963)"><path d="M0 0.5 H12.5 L13.5 1.5 V13.5 H0 Z" fill="url(#bl)"/><rect x="2" y="0.5" width="9" height="6.3" fill="#ffffff"/><rect x="3" y="9" width="7.5" height="4.5" fill="#283048"/><rect x="4.2" y="10" width="2.6" height="3.5" fill="#ffffff"/></g><path d="M113.5 52 L118 61.5 M120 52 L115.5 61.5" stroke="#b0b0b0" stroke-width="1.5" fill="none"/><circle cx="114" cy="63.3" r="2" fill="none" stroke="#b0b0b0" stroke-width="1.4"/><circle cx="119.3" cy="63.3" r="2" fill="none" stroke="#b0b0b0" stroke-width="1.4"/><g transform="translate(132.2,52)"><path d="M0.5 0.5 H5.5 L8.5 3.5 V9.5 H0.5 Z" fill="#fff" stroke="#2c4ea8" stroke-width="1"/><path d="M2 3.5 H6.7" stroke="#5a96e6" stroke-width="1"/><path d="M2 5.5 H6.7" stroke="#5a96e6" stroke-width="1"/><path d="M2 7.5 H6.7" stroke="#5a96e6" stroke-width="1"/></g><g transform="translate(138.3,56)"><path d="M0.5 0.5 H5.5 L8.5 3.5 V9 H0.5 Z" fill="#fff" stroke="#1c3c98" stroke-width="1"/><path d="M2 3.5 H6.7" stroke="#3a78dc" stroke-width="1"/><path d="M2 5.5 H6.7" stroke="#3a78dc" stroke-width="1"/><path d="M2 7.5 H6.7" stroke="#3a78dc" stroke-width="1"/></g><rect x="153.5" y="53.5" width="11" height="11.5" rx="1" fill="#c6c6c6" stroke="#b0b0b0"/><rect x="156.5" y="52" width="5" height="3" rx="1" fill="#dcdcdc" stroke="#a8a8a8" stroke-width="0.8"/><g transform="translate(159.5,58.5)"><path d="M0.5 0.5 H5.8 L8.8 3.5 V7 H0.5 Z" fill="#f0f0f0" stroke="#b4b4b4" stroke-width="1"/><path d="M2 3 H7" stroke="#c4c4c4" stroke-width="1"/><path d="M2 5 H7" stroke="#c4c4c4" stroke-width="1"/></g><path d="M189 57 Q194.8 52.3 195.6 58 Q195.8 62 192.3 64.3" fill="none" stroke="#bdbdbd" stroke-width="2.5"/><path d="M184.8 53.3 L191.8 54.2 L187 60 Z" fill="#bdbdbd"/><path d="M214.8 57 Q209 52.3 208.2 58 Q208 62 211.5 64.3" fill="none" stroke="#bdbdbd" stroke-width="2.5"/><path d="M219 53.3 L212 54.2 L216.8 60 Z" fill="#bdbdbd"/><path d="M236.3 58.3 L241.5 53 V56.5 H250 V60.3 H241.5 V63.7 Z" fill="#c2c2c2"/><path d="M272 58.3 L266.8 53 V56.5 H258.2 V60.3 H266.8 V63.7 Z" fill="#c2c2c2"/><path d="M290 52.6 V65.5" stroke="#b2b2b2" stroke-width="1.6"/><path d="M290.5 53 Q293 51.5 295.5 53 T300.3 53.5 V59.5 Q298 61 295.5 59.5 T290.5 59 Z" fill="#b8b8b8"/><path d="M312 52.6 V65.5" stroke="#b2b2b2" stroke-width="1.6"/><path d="M312.5 53 Q315 51.5 317.5 53 T322.3 53.5 V59.5 Q320 61 317.5 59.5 T312.5 59 Z" fill="#b8b8b8"/><path d="M315.5 63 L319 60 V62 H324 V64 H319 V66 Z" fill="#b8b8b8"/><path d="M334 52.6 V65.5" stroke="#b2b2b2" stroke-width="1.6"/><path d="M334.5 53 Q337 51.5 339.5 53 T344.3 53.5 V59.5 Q342 61 339.5 59.5 T334.5 59 Z" fill="#b8b8b8"/><path d="M346.5 63 L343 60 V62 H338 V64 H343 V66 Z" fill="#b8b8b8"/><path d="M356 52.6 V65.5" stroke="#b2b2b2" stroke-width="1.6"/><path d="M356.5 53 Q359 51.5 361.5 53 T366.3 53.5 V59.5 Q364 61 361.5 59.5 T356.5 59 Z" fill="#b8b8b8"/><path d="M362.5 60 L369 66 M369 60 L362.5 66" stroke="#b4b4b4" stroke-width="1.6"/><path d="M390.5 51v15" stroke="#8a8a8a" stroke-width="1" stroke-dasharray="1 1.4"/><path d="M385 53.5H399" stroke="#8c8c8c" stroke-width="1"/><path d="M390.5 55.8H399" stroke="#8c8c8c" stroke-width="1.8"/><path d="M390.5 58.8H396" stroke="#8c8c8c" stroke-width="1.8"/><path d="M385 61.3H399" stroke="#8c8c8c" stroke-width="1"/><path d="M385 63.6H388.5" stroke="#8c8c8c" stroke-width="1"/><path d="M390.5 63.6H395" stroke="#8c8c8c" stroke-width="1"/><path d="M388.5 57.5 l-3 -2 v4z" fill="#b0b0b0"/><path d="M383 57.5h3" stroke="#b0b0b0"/><path d="M412.5 51v15" stroke="#8a8a8a" stroke-width="1" stroke-dasharray="1 1.4"/><path d="M407 53.5H421" stroke="#8c8c8c" stroke-width="1"/><path d="M412.5 55.8H421" stroke="#8c8c8c" stroke-width="1.8"/><path d="M412.5 58.8H418" stroke="#8c8c8c" stroke-width="1.8"/><path d="M407 61.3H421" stroke="#8c8c8c" stroke-width="1"/><path d="M407 63.6H410.5" stroke="#8c8c8c" stroke-width="1"/><path d="M412.5 63.6H417" stroke="#8c8c8c" stroke-width="1"/><path d="M405.5 57.5 l3 -2 v4z" fill="#b0b0b0"/><path d="M408 57.5h3" stroke="#b0b0b0"/><path d="M428.8 65 L432.8 53 M433 65 L437 53" stroke="#a4a4a4" stroke-width="1.7"/><path d="M437.8 54.5h4.5" stroke="#9c9c9c" stroke-width="1"/><path d="M437.8 57.5h4.5" stroke="#9c9c9c" stroke-width="1"/><path d="M437.8 60.5h4.5" stroke="#9c9c9c" stroke-width="1"/><path d="M437.8 63.5h4.5" stroke="#9c9c9c" stroke-width="1"/><path d="M450.8 65 L454.8 53 M455 65 L459 53" stroke="#a4a4a4" stroke-width="1.7"/><path d="M459.8 54.5h4.5" stroke="#9c9c9c" stroke-width="1"/><path d="M459.8 57.5h4.5" stroke="#9c9c9c" stroke-width="1"/><path d="M459.5 60.5 l5 5 m0 -5 l-5 5" stroke="#a8a8a8" stroke-width="1.5"/><g transform="translate(479,53.5)"><path d="M0.5 11.5 V1.5 Q0.5 0.5 1.5 0.5 H5 L6.5 2 H11.5 V4.5 H3.5 L0.5 11.5Z" fill="#f6d98a" stroke="#a88a4a" stroke-width="1"/><path d="M0.8 11.6 L4 4.6 H16 L12.6 11.6 Z" fill="url(#fo)" stroke="#b07a10" stroke-width="0.8"/><path d="M1 12 H12.6" stroke="#3a2a08" stroke-width="1"/></g><g transform="translate(486,51.8)" fill="#1a1a1a"><rect x="0" y="3" width="3.2" height="5" rx="1"/><rect x="5" y="3" width="3.2" height="5" rx="1"/><rect x="0.8" y="0.3" width="2" height="3.5"/><rect x="5.6" y="0.3" width="2" height="3.5"/><rect x="2.8" y="2.4" width="2.8" height="2.2"/></g><g transform="translate(652.3,51.5)"><path d="M0.5 0.5 H8 L11 3.5 V14 H0.5 Z" fill="#fff" stroke="#3c64b8" stroke-width="1"/><path d="M2 3 H9.2" stroke="#3a70e8" stroke-width="1"/><path d="M2 5 H9.2" stroke="#3a70e8" stroke-width="1"/><path d="M2 7 H9.2" stroke="#3a70e8" stroke-width="1"/><path d="M2 9 H9.2" stroke="#3a70e8" stroke-width="1"/><path d="M2 11 H9.2" stroke="#3a70e8" stroke-width="1"/></g><g transform="translate(658.5,58.5) scale(1.08)" fill="#1a1a1a"><rect x="0" y="3" width="3.2" height="5" rx="1"/><rect x="5" y="3" width="3.2" height="5" rx="1"/><rect x="0.8" y="0.3" width="2" height="3.5"/><rect x="5.6" y="0.3" width="2" height="3.5"/><rect x="2.8" y="2.4" width="2.8" height="2.2"/></g><path d="M676 56.5 h4 v4.5 h2.6 l-4.6 4.6 l-4.6 -4.6 h2.6z" fill="#c4c4c4"/><g transform="translate(680.3,52.3)" fill="#b4b4b4"><rect x="0" y="3" width="3.2" height="5" rx="1"/><rect x="5" y="3" width="3.2" height="5" rx="1"/><rect x="0.8" y="0.3" width="2" height="3.5"/><rect x="5.6" y="0.3" width="2" height="3.5"/><rect x="2.8" y="2.4" width="2.8" height="2.2"/></g><path d="M713.5 62 L717.7 66" stroke="#14148c" stroke-width="2.6" stroke-linecap="round"/><circle cx="709.6" cy="57.8" r="5.9" fill="#fff" stroke="#1e1e1e" stroke-width="1.3"/><path d="M711.3 52.2 V61.6" stroke="#f01414" stroke-width="1.7"/><ellipse cx="708.8" cy="59" rx="2.3" ry="2.5" fill="none" stroke="#f01414" stroke-width="1.6"/><circle cx="740.8" cy="58.6" r="5.6" fill="#c2c2c2"/><circle cx="762.9" cy="58.6" r="5.2" fill="#fdfdfd" stroke="#cacaca" stroke-width="1.1"/><circle cx="788.3" cy="56" r="4.5" fill="#fdeeee" stroke="#d62828" stroke-width="1.2"/><circle cx="783.4" cy="61.2" r="5.2" fill="#fff6f6" stroke="#d62828" stroke-width="1.2"/><circle cx="809.5" cy="56" r="4.9" fill="#d65050"/><circle cx="804.3" cy="61.3" r="5.4" fill="#d04444"/><path d="M807 59 l7 7 m0 -7 l-7 7" stroke="#8a6a00" stroke-width="3.2"/><path d="M807 59 l7 7 m0 -7 l-7 7" stroke="#e8d028" stroke-width="1.9"/><rect x="826.6" y="48.4" width="34" height="21.2" rx="1.5" fill="#dcebfc" stroke="#3399ff" stroke-width="1.3"/><rect x="832.5" y="52.3" width="13" height="12" fill="#fff" stroke="#5a6a8a" stroke-width="0.8"/><rect x="832.5" y="52.3" width="13" height="2.4" fill="url(#wt)"/><path d="M832.2 64.7 H846 V52.5" fill="none" stroke="#2a3a5a" stroke-width="1.2"/><path d="M834 56.5h2M834 58.5h2M834 60.5h2M834 62.5h2" stroke="#c8d400" stroke-width="1"/><path d="M837 58.5h6.5M837 60.5h6.5M837 62.5h6.5M834 56.5h3.5" stroke="#a8c000" stroke-width="1"/><path d="M836.5 56v7" stroke="#b4c800" stroke-width="1"/><path d="M852.6 58.3 h5.4 l-2.7 3.2z" fill="#000"/><path d="M876.5 54.2 L885.3 63.5" stroke="#4a6898" stroke-width="3.4" stroke-linecap="round"/><path d="M876.5 54.2 L885.3 63.5" stroke="#7e9cc8" stroke-width="1.6" stroke-linecap="round"/><path d="M873.6 54.2 A3.6 3.6 0 1 0 878.6 51.2 L877.4 53.9 L875.6 53.6 L874.9 52.2 Z" fill="#6a88b8" stroke="#48648e" stroke-width="0.6"/><path d="M13.9 87.6 l7.6 -3.6 l7.6 3.6 l-7.6 3.6z" fill="#fff" stroke="#1f3864" stroke-width="0.9"/><path d="M13.9 84.6 l7.6 -3.6 l7.6 3.6 l-7.6 3.6z" fill="#fff" stroke="#1f3864" stroke-width="0.9"/><path d="M13.9 81.6 l7.6 -3.6 l7.6 3.6 l-7.6 3.6z" fill="#fff" stroke="#1f3864" stroke-width="0.9"/><path d="M23.1 76.5 v4.4 h2.4 l-4 4 l-4 -4 h2.4 v-4.4z" fill="#2f86f6"/><path d="M36.7 81 V90.4 H50.4 V81" fill="none" stroke="#1f3864" stroke-width="1.3"/><g shape-rendering="crispEdges"><rect x="37" y="77" width="1" height="1" fill="#1f3864"/><rect x="39" y="77" width="1" height="1" fill="#1f3864"/><rect x="41" y="77" width="1" height="1" fill="#1f3864"/><rect x="43" y="77" width="1" height="1" fill="#1f3864"/><rect x="45" y="77" width="1" height="1" fill="#1f3864"/><rect x="47" y="77" width="1" height="1" fill="#1f3864"/><rect x="49" y="77" width="1" height="1" fill="#1f3864"/><rect x="38" y="79" width="1" height="1" fill="#1f3864"/><rect x="40" y="79" width="1" height="1" fill="#1f3864"/><rect x="42" y="79" width="1" height="1" fill="#1f3864"/><rect x="44" y="79" width="1" height="1" fill="#1f3864"/><rect x="46" y="79" width="1" height="1" fill="#1f3864"/><rect x="48" y="79" width="1" height="1" fill="#1f3864"/><rect x="50" y="79" width="1" height="1" fill="#1f3864"/><rect x="39" y="86" width="1" height="1" fill="#1f3864"/><rect x="41" y="86" width="1" height="1" fill="#1f3864"/><rect x="43" y="86" width="1" height="1" fill="#1f3864"/><rect x="45" y="86" width="1" height="1" fill="#1f3864"/><rect x="47" y="86" width="1" height="1" fill="#1f3864"/><rect x="49" y="86" width="1" height="1" fill="#1f3864"/><rect x="39" y="88" width="1" height="1" fill="#1f3864"/><rect x="41" y="88" width="1" height="1" fill="#1f3864"/><rect x="43" y="88" width="1" height="1" fill="#1f3864"/><rect x="45" y="88" width="1" height="1" fill="#1f3864"/><rect x="47" y="88" width="1" height="1" fill="#1f3864"/><rect x="49" y="88" width="1" height="1" fill="#1f3864"/></g><path d="M43.8 78 v3.3 h2 l-2.8 3.2 l-2.8 -3.2 h2 v-3.3z" fill="#2f86f6"/><path d="M58.7 81 V90.4 H72.4 V81" fill="none" stroke="#1f3864" stroke-width="1.3"/><g shape-rendering="crispEdges"><rect x="59" y="77" width="1" height="1" fill="#1f3864"/><rect x="61" y="77" width="1" height="1" fill="#1f3864"/><rect x="63" y="77" width="1" height="1" fill="#1f3864"/><rect x="65" y="77" width="1" height="1" fill="#1f3864"/><rect x="67" y="77" width="1" height="1" fill="#1f3864"/><rect x="69" y="77" width="1" height="1" fill="#1f3864"/><rect x="71" y="77" width="1" height="1" fill="#1f3864"/><rect x="60" y="79" width="1" height="1" fill="#1f3864"/><rect x="62" y="79" width="1" height="1" fill="#1f3864"/><rect x="64" y="79" width="1" height="1" fill="#1f3864"/><rect x="66" y="79" width="1" height="1" fill="#1f3864"/><rect x="68" y="79" width="1" height="1" fill="#1f3864"/><rect x="70" y="79" width="1" height="1" fill="#1f3864"/><rect x="72" y="79" width="1" height="1" fill="#1f3864"/><rect x="61" y="86" width="1" height="1" fill="#1f3864"/><rect x="63" y="86" width="1" height="1" fill="#1f3864"/><rect x="65" y="86" width="1" height="1" fill="#1f3864"/><rect x="67" y="86" width="1" height="1" fill="#1f3864"/><rect x="69" y="86" width="1" height="1" fill="#1f3864"/><rect x="71" y="86" width="1" height="1" fill="#1f3864"/><rect x="61" y="88" width="1" height="1" fill="#1f3864"/><rect x="63" y="88" width="1" height="1" fill="#1f3864"/><rect x="65" y="88" width="1" height="1" fill="#1f3864"/><rect x="67" y="88" width="1" height="1" fill="#1f3864"/><rect x="69" y="88" width="1" height="1" fill="#1f3864"/><rect x="71" y="88" width="1" height="1" fill="#1f3864"/></g><path d="M62.8 78 v3.3 h2 l-2.8 3.2 l-2.8 -3.2 h2 v-3.3z" fill="#2f86f6"/><path d="M69.1 78 v3.3 h2 l-2.8 3.2 l-2.8 -3.2 h2 v-3.3z" fill="#2f86f6"/><path d="M80 87.6 l7.6 -3.6 l7.6 3.6 l-7.6 3.6z" fill="#c4c4c4" stroke="#b4b4b4" stroke-width="0.9"/><path d="M80 84.6 l7.6 -3.6 l7.6 3.6 l-7.6 3.6z" fill="#c4c4c4" stroke="#b4b4b4" stroke-width="0.9"/><path d="M80 81.6 l7.6 -3.6 l7.6 3.6 l-7.6 3.6z" fill="#c4c4c4" stroke="#b4b4b4" stroke-width="0.9"/><path d="M101.7 81 V90.4 H115.4 V81" fill="none" stroke="#bcbcbc" stroke-width="1.3"/><g shape-rendering="crispEdges"><rect x="102" y="77" width="1" height="1" fill="#b4b4b4"/><rect x="104" y="77" width="1" height="1" fill="#b4b4b4"/><rect x="106" y="77" width="1" height="1" fill="#b4b4b4"/><rect x="108" y="77" width="1" height="1" fill="#b4b4b4"/><rect x="110" y="77" width="1" height="1" fill="#b4b4b4"/><rect x="112" y="77" width="1" height="1" fill="#b4b4b4"/><rect x="114" y="77" width="1" height="1" fill="#b4b4b4"/><rect x="103" y="79" width="1" height="1" fill="#b4b4b4"/><rect x="105" y="79" width="1" height="1" fill="#b4b4b4"/><rect x="107" y="79" width="1" height="1" fill="#b4b4b4"/><rect x="109" y="79" width="1" height="1" fill="#b4b4b4"/><rect x="111" y="79" width="1" height="1" fill="#b4b4b4"/><rect x="113" y="79" width="1" height="1" fill="#b4b4b4"/><rect x="115" y="79" width="1" height="1" fill="#b4b4b4"/><rect x="104" y="86" width="1" height="1" fill="#b4b4b4"/><rect x="106" y="86" width="1" height="1" fill="#b4b4b4"/><rect x="108" y="86" width="1" height="1" fill="#b4b4b4"/><rect x="110" y="86" width="1" height="1" fill="#b4b4b4"/><rect x="112" y="86" width="1" height="1" fill="#b4b4b4"/><rect x="114" y="86" width="1" height="1" fill="#b4b4b4"/><rect x="104" y="88" width="1" height="1" fill="#b4b4b4"/><rect x="106" y="88" width="1" height="1" fill="#b4b4b4"/><rect x="108" y="88" width="1" height="1" fill="#b4b4b4"/><rect x="110" y="88" width="1" height="1" fill="#b4b4b4"/><rect x="112" y="88" width="1" height="1" fill="#b4b4b4"/><rect x="114" y="88" width="1" height="1" fill="#b4b4b4"/></g><path d="M110.5 86 l6 6 m0 -6 l-6 6" stroke="#b4b4b4" stroke-width="1.6"/><text x="131.6" y="82" font-family="Liberation Mono,monospace" font-size="6.6" fill="#747474" textLength="15.6" lengthAdjust="spacingAndGlyphs">LOAD</text><path d="M134.4 83.5 h3 v4 h2 l-3.5 4.2 l-3.5 -4.2 h2z M141.2 83.5 h3 v4 h2 l-3.5 4.2 l-3.5 -4.2 h2z" fill="#c0c0c0"/><circle cx="139.3" cy="85.2" r="2.2" fill="#b0b0b0"/><rect x="160.7" y="77.5" width="144" height="14.5" fill="#fff"/><rect x="291.8" y="78" width="12.3" height="13" fill="#d9d9d9"/><path d="M295.6 83 h5.4 l-2.7 3.2z" fill="#000"/><path d="M314.7 88 V85 L316.3 83 L317.9 85 V88 M314.7 86.5 H312.5 V88.5 M317.9 86.5 H320.3 V88.5" fill="none" stroke="#2a5ad0" stroke-width="0.9"/><rect x="314.8" y="78.6" width="3" height="3" fill="#ffe600" stroke="#2a5ad0" stroke-width="0.9"/><rect x="311" y="88.3" width="3" height="3" fill="#ffe600" stroke="#2a5ad0" stroke-width="0.9"/><rect x="318.8" y="88.3" width="3" height="3" fill="#ffe600" stroke="#2a5ad0" stroke-width="0.9"/><path d="M316.3 81.6 v2" stroke="#2a5ad0" stroke-width="0.9"/><path d="M316.3 83.2 l1.5 1.8 l-1.5 1.8 l-1.5 -1.8z" fill="#3a5a9a"/><path d="M317 79.5 L327 89.3" stroke="#000" stroke-width="1.7"/><path d="M317 79.5 L319.2 81.7" stroke="#ffe600" stroke-width="1.7"/><path d="M320 77.6l1.4 0.3l-1 1z M324 77l1.4 0.3l-1 1z M322.3 80.8l1.4 0.3l-1 1z M326 82l1.4 0.3l-1 1z M323.6 83.6l1.2 0.3l-0.8 0.8z" fill="#e02020" stroke="#e02020" stroke-width="0.5"/><path d="M345.9 78.4 l1 -1.3 h4.6 l1 1.3z" fill="#1c2c80"/><rect x="345.9" y="78.4" width="6.6" height="6" fill="#f01414" stroke="#1f3864" stroke-width="1"/><path d="M342.6 85 l1 -1.3 h4.6 l1 1.3z" fill="#1c2c80"/><rect x="342.6" y="85" width="6.6" height="6" fill="#14e028" stroke="#1f3864" stroke-width="1"/><path d="M349.3 85 l1 -1.3 h4.6 l1 1.3z" fill="#1c2c80"/><rect x="349.3" y="85" width="6.6" height="6" fill="#f4f4f4" stroke="#1f3864" stroke-width="1"/><path d="M353.3 87.5v1.8h-1.8M346.6 87.5v1.8h-1.8M350 80.9v1.8h-1.8" stroke="#a0a0a0" stroke-width="0.7" fill="none"/><rect x="363.4" y="77.3" width="9.4" height="6.2" fill="#fafafa" stroke="#aaaaaa" stroke-width="1"/><path d="M363.4 78.3h9.4" stroke="#b4b4b4" stroke-width="1.4"/><rect x="365.9" y="81.3" width="9.4" height="6.2" fill="#fafafa" stroke="#aaaaaa" stroke-width="1"/><path d="M365.9 82.3h9.4" stroke="#b4b4b4" stroke-width="1.4"/><rect x="368.3" y="85.2" width="9.4" height="6.2" fill="#fafafa" stroke="#aaaaaa" stroke-width="1"/><path d="M368.3 86.2h9.4" stroke="#b4b4b4" stroke-width="1.4"/><rect x="500.5" y="50.5" width="145.5" height="16.3" fill="#f2f2f2" stroke="#b8b8b8" stroke-width="1"/><path d="M501 51.5 H645.5" stroke="#9c9c9c" stroke-width="1"/><path d="M634.7 57.5 h5.3 l-2.65 3z" fill="#6e6e6e"/></svg>
<svg style="left:0;top:0" width="214" height="810" viewBox="0 0 214 810"><rect x="7.5" y="786.3" width="13" height="12" fill="#fff" stroke="#5a6a8a" stroke-width="0.8"/><rect x="7.5" y="786.3" width="13" height="2.4" fill="url(#wt2)"/><path d="M7.2 798.7 H21 V786.5" fill="none" stroke="#2a3a5a" stroke-width="1.2"/><defs><linearGradient id="wt2" x1="0" y1="0" x2="0" y2="1"><stop offset="0" stop-color="#8fb0f0"/><stop offset="1" stop-color="#4a78d8"/></linearGradient></defs><path d="M9 790.5h2M9 792.5h2M9 794.5h2M9 796.5h2" stroke="#c8d400" stroke-width="1"/><path d="M12 792.5h6.5M12 794.5h6.5M12 796.5h6.5M9 790.5h3.5" stroke="#a8c000" stroke-width="1"/><path d="M11.5 790v7" stroke="#b4c800" stroke-width="1"/><path d="M56.5 792.5 L64.5 785.5 L71 790 L63 798.5 Z" fill="#9a7ae8" stroke="#6a3ad0" stroke-width="1"/><path d="M57 793.5 L63 799.5 L64.5 798" fill="none" stroke="#7a5ad8" stroke-width="1.2"/><circle cx="66.3" cy="796" r="4.3" fill="#4a6adc" stroke="#c8d4f8" stroke-width="0.8"/><text x="64.2" y="799" font-family="Liberation Sans,sans-serif" font-size="7.5" font-weight="bold" fill="#fff">?</text><text x="108.6" y="796.3" font-family="Liberation Mono,monospace" font-size="12" font-weight="bold" fill="#111" textLength="11.5" lengthAdjust="spacingAndGlyphs">{}</text><text x="156.8" y="796.3" font-family="Liberation Mono,monospace" font-size="12" font-weight="bold" fill="#111" textLength="7" lengthAdjust="spacingAndGlyphs">()</text><path d="M164.7 796.3 h3.3 v-2.3 l4 3.5 l-4 3.5 v-2.3 h-3.3z" fill="#2a5ae0"/></svg>
<svg style="left:0;top:0;white-space:pre" width="1651" height="1008" viewBox="0 0 1651 1008"><text x="26.19" y="15.00" font-family="Liberation Sans,sans-serif" font-size="12.5" fill="#000" textLength="108.17" lengthAdjust="spacing">project  - µVision4</text><text x="9.32" y="37.70" font-family="Liberation Sans,sans-serif" font-size="12" fill="#000" textLength="18.82" lengthAdjust="spacing">File</text><text x="42.62" y="37.70" font-family="Liberation Sans,sans-serif" font-size="12" fill="#000" textLength="20.47" lengthAdjust="spacing">Edit</text><text x="78.45" y="37.70" font-family="Liberation Sans,sans-serif" font-size="12" fill="#000" textLength="24.52" lengthAdjust="spacing">View</text><text x="117.52" y="37.70" font-family="Liberation Sans,sans-serif" font-size="12" fill="#000" textLength="35.27" lengthAdjust="spacing">Project</text><text x="167.52" y="37.70" font-family="Liberation Sans,sans-serif" font-size="12" fill="#000" textLength="28.06" lengthAdjust="spacing">Flash</text><text x="209.32" y="37.70" font-family="Liberation Sans,sans-serif" font-size="12" fill="#000" textLength="36.26" lengthAdjust="spacing">Debug</text><text x="259.32" y="37.70" font-family="Liberation Sans,sans-serif" font-size="12" fill="#000" textLength="58.12" lengthAdjust="spacing">Peripherals</text><text x="331.73" y="37.70" font-family="Liberation Sans,sans-serif" font-size="12" fill="#000" textLength="28.00" lengthAdjust="spacing">Tools</text><text x="373.76" y="37.70" font-family="Liberation Sans,sans-serif" font-size="12" fill="#000" textLength="27.10" lengthAdjust="spacing">SVCS</text><text x="415.25" y="37.70" font-family="Liberation Sans,sans-serif" font-size="12" fill="#000" textLength="44.32" lengthAdjust="spacing">Window</text><text x="473.32" y="37.70" font-family="Liberation Sans,sans-serif" font-size="12" fill="#000" textLength="25.79" lengthAdjust="spacing">Help</text><text x="3.66" y="112.00" font-family="Liberation Sans,sans-serif" font-size="11.5" fill="#f4f4f4" textLength="35.53" lengthAdjust="spacing">Project</text><text x="43.92" y="136.20" font-family="Liberation Sans,sans-serif" font-size="12.5" fill="#000" textLength="49.19" lengthAdjust="spacing">Target 1</text><text x="63.13" y="156.20" font-family="Liberation Sans,sans-serif" font-size="12.5" fill="#000" textLength="92.38" lengthAdjust="spacing">Source Group 1</text><text x="82.17" y="176.20" font-family="Liberation Sans,sans-serif" font-size="12.5" fill="#000" textLength="37.46" lengthAdjust="spacing">main.c</text><text x="100.97" y="196.20" font-family="Liberation Sans,sans-serif" font-size="12.5" fill="#000" textLength="50.94" lengthAdjust="spacing">regx52.h</text><text x="62.67" y="216.20" font-family="Liberation Sans,sans-serif" font-size="12.5" fill="#000" textLength="65.05" lengthAdjust="spacing">HAL Group</text><text x="82.17" y="236.20" font-family="Liberation Sans,sans-serif" font-size="12" fill="#000" textLength="76.65" lengthAdjust="spacing">hal_lcd1602.c</text><text x="82.17" y="256.20" font-family="Liberation Sans,sans-serif" font-size="12" fill="#000" textLength="77.61" lengthAdjust="spacing">hal_lcd1602.h</text><text x="62.67" y="276.20" font-family="Liberation Sans,sans-serif" font-size="12.5" fill="#000" textLength="66.55" lengthAdjust="spacing">MID Group</text><text x="82.17" y="296.20" font-family="Liberation Sans,sans-serif" font-size="12.5" fill="#000" textLength="81.76" lengthAdjust="spacing">mid_lcd1602.c</text><text x="82.17" y="316.20" font-family="Liberation Sans,sans-serif" font-size="12.5" fill="#000" textLength="82.64" lengthAdjust="spacing">mid_lcd1602.h</text><text x="24.06" y="797.80" font-family="Liberation Sans,sans-serif" font-size="11.5" fill="#000" textLength="19.59" lengthAdjust="spacing">Pr...</text><text x="73.86" y="797.80" font-family="Liberation Sans,sans-serif" font-size="11.5" fill="#6e6e6e" textLength="23.89" lengthAdjust="spacing">Bo...</text><text x="123.96" y="797.80" font-family="Liberation Sans,sans-serif" font-size="11.5" fill="#6e6e6e" textLength="22.59" lengthAdjust="spacing">Fu...</text><text x="174.54" y="797.80" font-family="Liberation Sans,sans-serif" font-size="11.5" fill="#6e6e6e" textLength="20.21" lengthAdjust="spacing">Te...</text><text x="264.50" y="115.30" font-family="Liberation Sans,sans-serif" font-size="11.5" fill="#000" textLength="71.54" lengthAdjust="spacing">hal_lcd1602.h</text><text x="376.50" y="115.30" font-family="Liberation Sans,sans-serif" font-size="11.5" fill="#000" textLength="69.10" lengthAdjust="spacing">hal_lcd1602.c</text><text x="486.86" y="115.30" font-family="Liberation Sans,sans-serif" font-size="11.5" fill="#000" textLength="83.38" lengthAdjust="spacing">MID_LCD1602.C</text><text x="610.54" y="115.30" font-family="Liberation Sans,sans-serif" font-size="11.5" fill="#000" textLength="74.01" lengthAdjust="spacing">mid_lcd1602.h</text><text x="727.04" y="115.30" font-family="Liberation Sans,sans-serif" font-size="11.5" fill="#000" textLength="34.07" lengthAdjust="spacing">main.c</text><text x="3.67" y="824.00" font-family="Liberation Sans,sans-serif" font-size="12.5" fill="#fff" textLength="68.62" lengthAdjust="spacing">Build Output</text><text x="1189.28" y="1005.30" font-family="Liberation Sans,sans-serif" font-size="11.5" fill="#1e9a1e" textLength="54.77" lengthAdjust="spacing">Simulation</text><text x="1534.77" y="1005.30" font-family="Liberation Sans,sans-serif" font-size="10.5" fill="#6a6a6a" textLength="21.09" lengthAdjust="spacing">CAP</text><text x="1560.24" y="1005.30" font-family="Liberation Sans,sans-serif" font-size="10.5" fill="#000" textLength="26.72" lengthAdjust="spacing">NUM</text><text x="1592.82" y="1005.30" font-family="Liberation Sans,sans-serif" font-size="10.5" fill="#6a6a6a" textLength="24.53" lengthAdjust="spacing">SCRL</text><text x="1623.80" y="1005.30" font-family="Liberation Sans,sans-serif" font-size="10.5" fill="#6a6a6a" textLength="22.98" lengthAdjust="spacing">OVR</text><text x="163.70" y="87.80" font-family="Liberation Mono,monospace" font-size="10" fill="#000" font-weight="bold">Target 1</text></svg>
</div>
</body></html>
